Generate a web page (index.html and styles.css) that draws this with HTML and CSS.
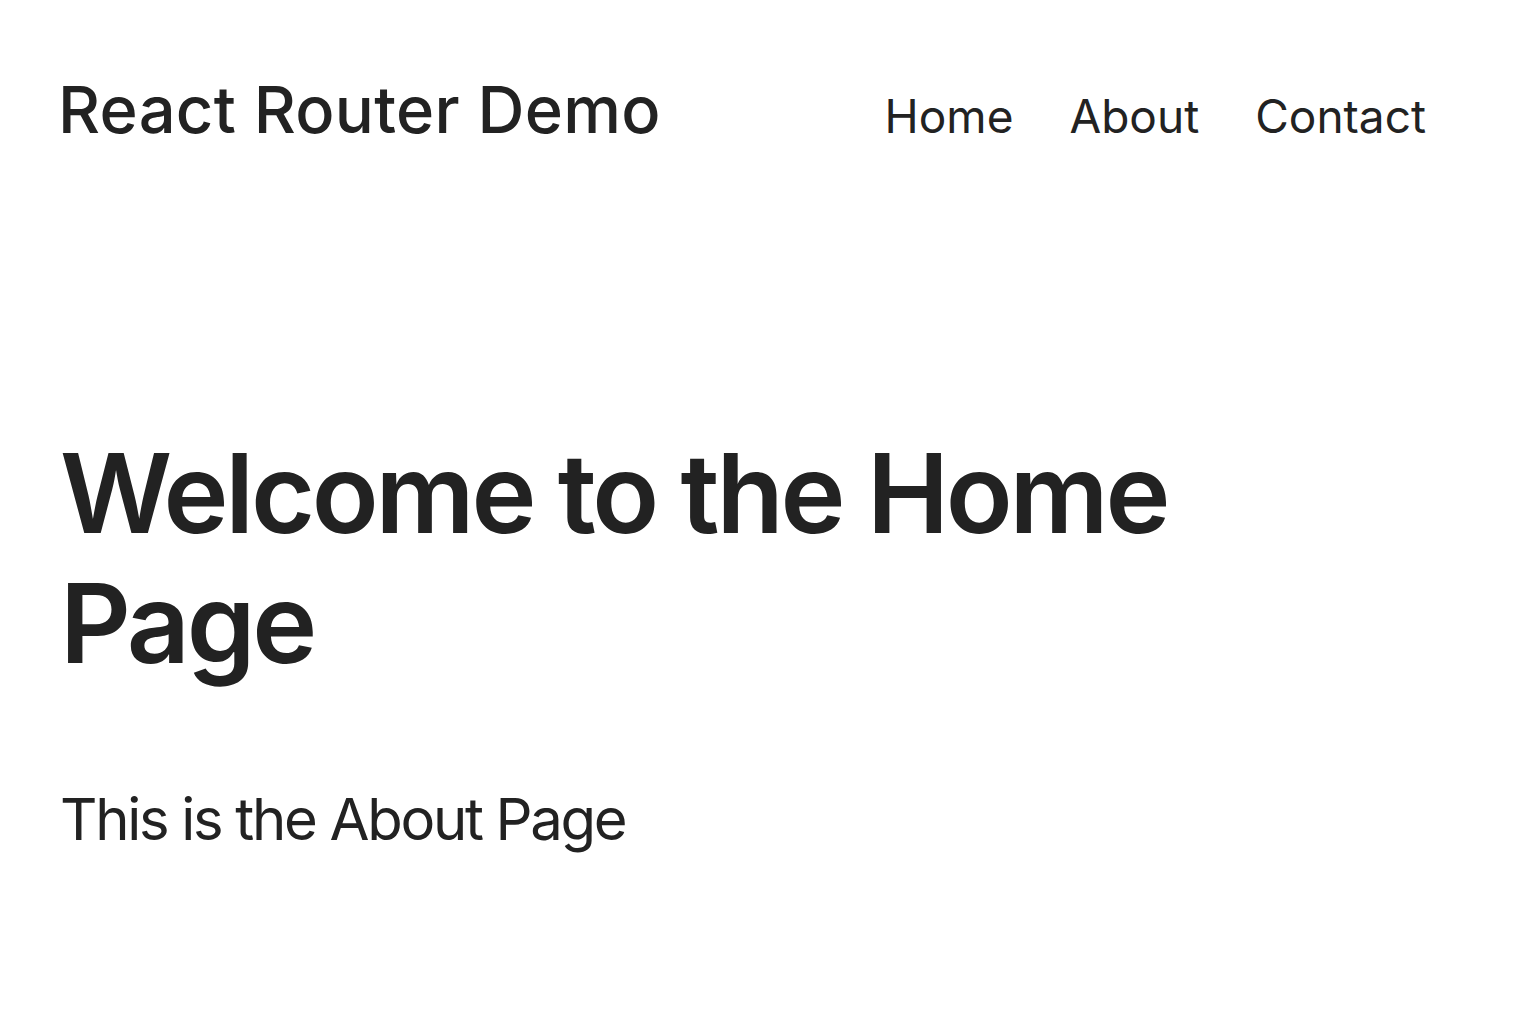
FILE: index.html
```html
<!DOCTYPE html>
<html lang="en">
<head>
<meta charset="utf-8">
<title>React Router Demo</title>
<link rel="stylesheet" href="styles.css">
</head>
<body>
<header class="header">
  <div class="brand">React Router Demo</div>
  <nav class="nav">
    <a href="#" class="nav-link">Home</a>
    <a href="#" class="nav-link">About</a>
    <a href="#" class="nav-link">Contact</a>
  </nav>
</header>
<main class="main">
  <h1 class="title">Welcome to the Home Page</h1>
  <p class="text">This is the About Page</p>
</main>
</body>
</html>
```
FILE: styles.css
```css
html, body {
  margin: 0;
  padding: 0;
  background: #ffffff;
}
body {
  font-family: Inter, "Noto Sans", sans-serif;
  color: #222222;
}
.header {
  display: flex;
  justify-content: space-between;
  align-items: baseline;
  padding: 70px 110px 0 58px;
}
.brand {
  font-size: 65px;
  font-weight: 500;
  letter-spacing: 0.3px;
  line-height: 80px;
}
.nav {
  display: flex;
  gap: 56px;
}
.nav-link {
  color: #222222;
  text-decoration: none;
  font-size: 46px;
  font-weight: 400;
  line-height: 60px;
}
.main {
  padding: 0 60px;
}
.title {
  margin: 278px 0 0 0;
  max-width: 1200px;
  font-size: 110px;
  font-weight: 600;
  line-height: 130px;
  letter-spacing: -3.2px;
}
.text {
  margin: 96px 0 0 0;
  font-size: 58px;
  font-weight: 400;
  line-height: 70px;
  letter-spacing: -2.3px;
}
```
